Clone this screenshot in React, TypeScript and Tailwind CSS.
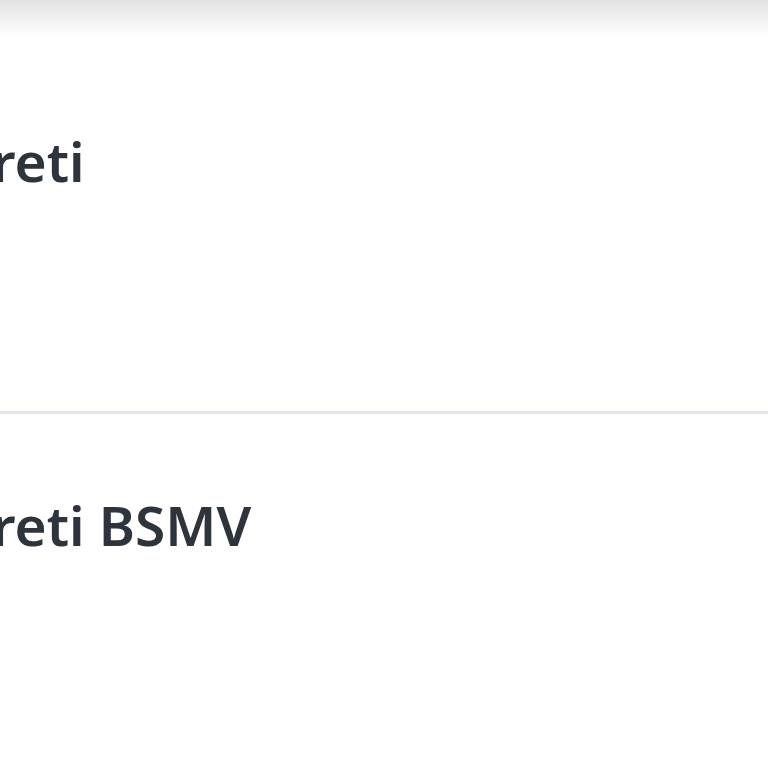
export default function App() {
    const rowText = "relative -ml-[77px] whitespace-nowrap text-[55px] leading-none font-semibold text-[#2e343c]"

    return (
        <div className="h-screen w-full overflow-hidden bg-white flex flex-col" style={{ fontFamily: '"Noto Sans", "Open Sans", sans-serif' }}>
            <div className="h-[36px] shrink-0 bg-gradient-to-b from-[#e2e2e2] to-white" />
            <div className="h-[375px] shrink-0 pt-[97px] overflow-hidden">
                <div className={rowText}>Ücreti</div>
            </div>
            <div className="h-[3px] shrink-0 bg-[#e3e6ee]" />
            <div className="flex-1 pt-[83px] overflow-hidden">
                <div className={rowText}>Ücreti BSMV</div>
            </div>
        </div>
    )
}
